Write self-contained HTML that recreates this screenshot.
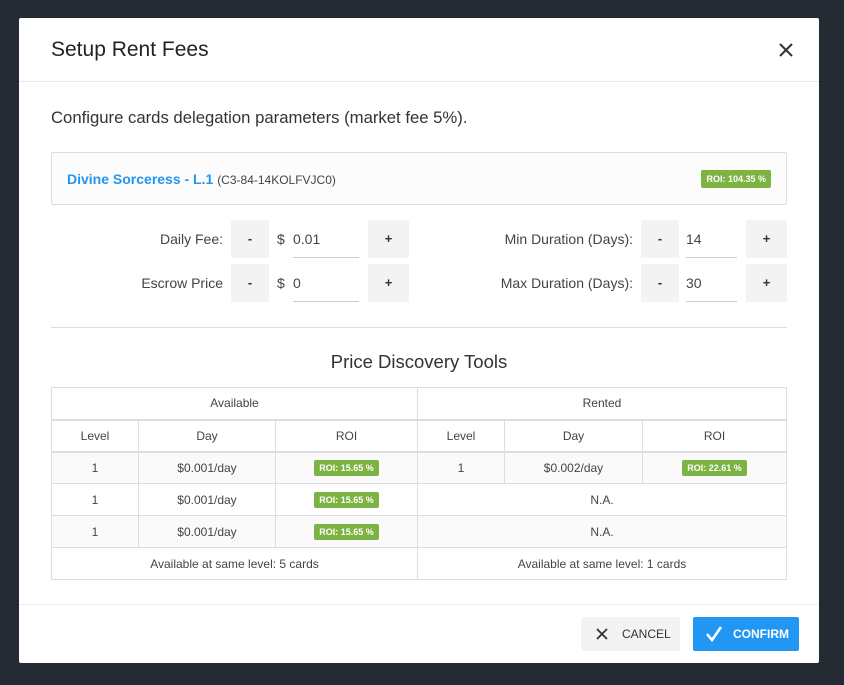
<!DOCTYPE html>
<html><head><style>
*{box-sizing:border-box;margin:0;padding:0}
body{width:844px;height:685px;background:#252b33;font-family:"Liberation Sans",sans-serif;position:relative;overflow:hidden;color:#333}
.m{position:absolute;left:19px;top:18px;width:800px;height:645px;background:#fff;border-radius:2px}
.a{position:absolute}
.t{left:32px;top:20px;font-size:21px;color:#222}
.hl{left:0;top:63px;width:800px;height:1px;background:#e8e8e8}
.btn{background:#f3f3f3;width:38px;height:38px;text-align:center;line-height:38px;font-size:13px;color:#333;font-weight:bold}
.lbl{font-size:14px;color:#444;text-align:right}
.inp{border-bottom:1px solid #ccc;height:38px;line-height:38px;font-size:14px;color:#444}
table{border-collapse:collapse;position:absolute;left:32px;top:369px;width:736px;font-size:12px;color:#444}
td{border:1px solid #ddd;text-align:center;height:32px}
.h td{border-bottom:2px solid #ddd}
.g td{background:#fafafa}
.r{display:inline-block;background:#7cb342;color:#fff;font-size:9px;font-weight:bold;padding:3px 5px;border-radius:2px}
</style></head><body>
<div class="m">
<div class="a t">Setup Rent Fees</div>
<svg class="a" style="left:760px;top:25px" width="14" height="14"><path d="M1 1L13 13M13 1L1 13" stroke="#333" stroke-width="2"/></svg>
<div class="a hl"></div>
<div class="a" style="left:32px;top:90px;font-size:16.7px;color:#333">Configure cards delegation parameters (market fee 5%).</div>
<div class="a" style="left:32px;top:134px;width:736px;height:53px;border:1px solid #ddd;background:#fcfcfc;border-radius:2px">
<span class="a" style="left:15px;top:18px;font-size:14px;color:#2196f3;font-weight:bold;white-space:nowrap">Divine Sorceress - L.1 <span style="font-weight:normal;color:#444;font-size:12px">(C3-84-14KOLFVJC0)</span></span>
<span class="a r" style="right:15px;top:17px;font-size:9px;padding:4px 5px">ROI: 104.35 %</span></div>
<div class="a lbl" style="left:60px;top:202px;width:144px;line-height:38px">Daily Fee:</div>
<div class="a btn" style="left:212px;top:202px">-</div>
<div class="a inp" style="left:258px;top:202px;border:none">$</div>
<div class="a inp" style="left:274px;top:202px;width:66px">0.01</div>
<div class="a btn" style="left:349px;top:202px;width:41px">+</div>
<div class="a lbl" style="left:60px;top:246px;width:144px;line-height:38px">Escrow Price</div>
<div class="a btn" style="left:212px;top:246px">-</div>
<div class="a inp" style="left:258px;top:246px;border:none">$</div>
<div class="a inp" style="left:274px;top:246px;width:66px">0</div>
<div class="a btn" style="left:349px;top:246px;width:41px">+</div>
<div class="a lbl" style="left:400px;top:202px;width:214px;line-height:38px">Min Duration (Days):</div>
<div class="a btn" style="left:622px;top:202px">-</div>
<div class="a inp" style="left:667px;top:202px;width:51px">14</div>
<div class="a btn" style="left:727px;top:202px;width:41px">+</div>
<div class="a lbl" style="left:400px;top:246px;width:214px;line-height:38px">Max Duration (Days):</div>
<div class="a btn" style="left:622px;top:246px">-</div>
<div class="a inp" style="left:667px;top:246px;width:51px">30</div>
<div class="a btn" style="left:727px;top:246px;width:41px">+</div>
<div class="a" style="left:32px;top:309px;width:736px;height:1px;background:#ddd"></div>
<div class="a" style="left:0;width:800px;top:333px;text-align:center;font-size:18.5px;color:#333">Price Discovery Tools</div>
<table>
<tr class="h"><td colspan="3" style="width:366px">Available</td><td colspan="3">Rented</td></tr>
<tr class="h"><td style="width:87px">Level</td><td style="width:137px">Day</td><td style="width:142px">ROI</td><td style="width:87px">Level</td><td style="width:138px">Day</td><td>ROI</td></tr>
<tr class="g"><td>1</td><td>$0.001/day</td><td><span class="r">ROI: 15.65 %</span></td><td>1</td><td>$0.002/day</td><td><span class="r">ROI: 22.61 %</span></td></tr>
<tr><td>1</td><td>$0.001/day</td><td><span class="r">ROI: 15.65 %</span></td><td colspan="3">N.A.</td></tr>
<tr class="g"><td>1</td><td>$0.001/day</td><td><span class="r">ROI: 15.65 %</span></td><td colspan="3">N.A.</td></tr>
<tr><td colspan="3">Available at same level: 5 cards</td><td colspan="3">Available at same level: 1 cards</td></tr>
</table>
<div class="a" style="left:0;top:586px;width:800px;height:1px;background:#eee"></div>
<div class="a" style="left:562px;top:599px;width:99px;height:34px;background:#f3f3f3;border-radius:2px;font-size:12px;line-height:34px;color:#333">
<svg class="a" style="left:15px;top:11px" width="12" height="12"><path d="M1 1L11 11M11 1L1 11" stroke="#333" stroke-width="1.8"/></svg><span class="a" style="left:41px">CANCEL</span></div>
<div class="a" style="left:674px;top:599px;width:106px;height:34px;background:#2196f3;border-radius:2px;font-size:12px;font-weight:bold;line-height:34px;color:#fff">
<svg class="a" style="left:12px;top:8px" width="18" height="18"><path d="M2 9L7 15L16 2" stroke="#fff" stroke-width="2.5" fill="none"/></svg><span class="a" style="left:40px">CONFIRM</span></div>
</div>
</body></html>
